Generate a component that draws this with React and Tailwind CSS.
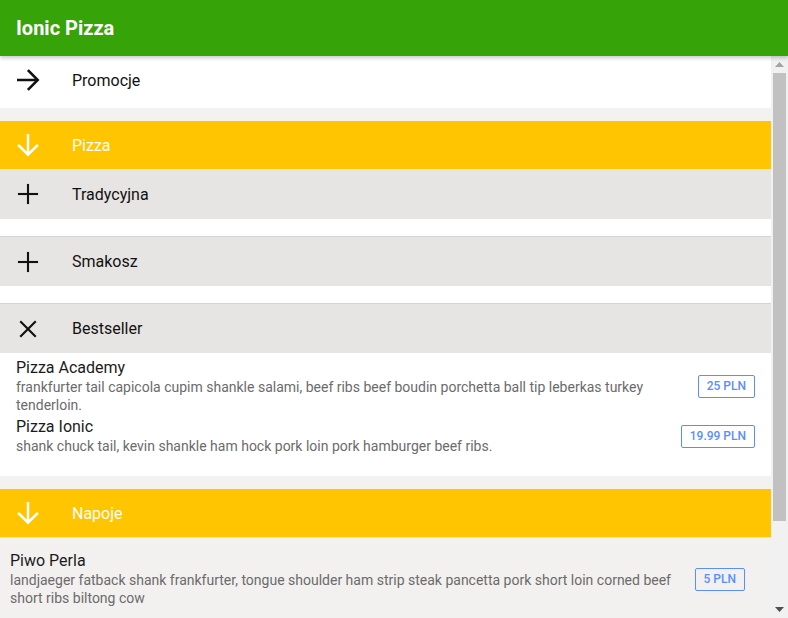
import React from 'react';

const font = { fontFamily: 'Roboto, "Noto Sans", Arial, sans-serif' };

function Icon({ name, className }) {
  const common = {
    fill: 'none',
    stroke: 'currentColor',
    strokeLinecap: 'square',
    strokeLinejoin: 'miter',
  };
  return (
    <svg viewBox="0 0 512 512" className={className}>
      {name === 'forward' && (
        <g {...common} strokeWidth="40">
          <polyline points="268 112 412 256 268 400" />
          <line x1="392" y1="256" x2="100" y2="256" />
        </g>
      )}
      {name === 'down' && (
        <g {...common} strokeWidth="40">
          <polyline points="112 268 256 412 400 268" />
          <line x1="256" y1="392" x2="256" y2="100" />
        </g>
      )}
      {name === 'add' && (
        <g {...common} strokeWidth="34">
          <line x1="256" y1="112" x2="256" y2="400" />
          <line x1="400" y1="256" x2="112" y2="256" />
        </g>
      )}
      {name === 'close' && (
        <g {...common} strokeWidth="34">
          <line x1="368" y1="368" x2="144" y2="144" />
          <line x1="368" y1="144" x2="144" y2="368" />
        </g>
      )}
    </svg>
  );
}

function Row({ icon, label, className, labelClass = 'pt-[2px]' }) {
  return (
    <div className={`flex items-center ${className}`}>
      <div className="w-[72px] pl-3 flex items-center">
        <Icon name={icon} className="w-8 h-8" />
      </div>
      <span className={`text-base ${labelClass}`}>{label}</span>
    </div>
  );
}

function Price({ children }) {
  return (
    <span className="shrink-0 h-[23px] px-2 flex items-center border border-[#5a8dff] rounded-[2px] text-xs font-medium text-[#5a8dff]">
      {children}
    </span>
  );
}

function Product({ name, desc, price, className }) {
  return (
    <div className={`flex items-center ${className}`}>
      <div className="flex-1 pr-4">
        <div className="text-base leading-5 text-[#1b1b1b]">{name}</div>
        <div className="text-sm leading-[18px] text-[#6b6b6b]">{desc}</div>
      </div>
      <Price>{price}</Price>
    </div>
  );
}

function Scrollbar() {
  return (
    <div className="w-[17px] shrink-0 flex flex-col bg-[#f1f1f1]">
      <div className="h-[17px] flex items-center justify-center">
        <svg width="9" height="5" viewBox="0 0 9 5">
          <polygon points="0,5 9,5 4.5,0" fill="#a3a3a3" />
        </svg>
      </div>
      <div className="flex-1 px-[2px]">
        <div className="h-[448px] bg-[#c1c1c1]" />
      </div>
      <div className="h-[17px] flex items-center justify-center">
        <svg width="9" height="5" viewBox="0 0 9 5">
          <polygon points="0,0 9,0 4.5,5" fill="#505050" />
        </svg>
      </div>
    </div>
  );
}

export default function App() {
  return (
    <div className="h-screen flex flex-col bg-white" style={font}>
      <header className="relative z-10 h-14 shrink-0 flex items-center px-4 bg-[#36a309] shadow-[0_2px_4px_rgba(0,0,0,0.22)]">
        <h1 className="text-xl font-bold text-white">Ionic Pizza</h1>
      </header>

      <div className="flex-1 min-h-0 flex">
        <div className="flex-1 overflow-hidden">
          <Row icon="forward" label="Promocje" className="h-[52px] pb-1 bg-white text-[#111]" />
          <div className="h-[13px] bg-[#f3f2f1]" />

          <Row icon="down" label="Pizza" className="h-12 bg-[#ffc500] text-white" />
          <Row icon="add" label="Tradycyjna" className="h-[50px] bg-[#e7e5e3] text-[#111]" />
          <div className="h-[17px] bg-white" />
          <Row icon="add" label="Smakosz" labelClass="pt-0" className="h-[50px] bg-[#e7e5e3] border-t border-[#d6d4d2] text-[#111]" />
          <div className="h-[17px] bg-white" />
          <Row icon="close" label="Bestseller" labelClass="pt-0" className="h-[50px] bg-[#e7e5e3] border-t border-[#d6d4d2] text-[#111]" />

          <div className="bg-white pt-[5px] pb-[21px] px-4 flex flex-col gap-[3px]">
            <Product
              name="Pizza Academy"
              desc="frankfurter tail capicola cupim shankle salami, beef ribs beef boudin porchetta ball tip leberkas turkey tenderloin."
              price="25 PLN"
            />
            <Product
              name="Pizza Ionic"
              desc="shank chuck tail, kevin shankle ham hock pork loin pork hamburger beef ribs."
              price="19.99 PLN"
            />
          </div>
          <div className="h-[13px] bg-[#f3f2f1]" />

          <Row icon="down" label="Napoje" className="h-[49px] bg-[#ffc500] text-white border-b border-[#e6e3de]" />
          <div className="bg-[#f2f1f0] pt-[13px] pb-[60px] pl-[10px] pr-[26px]">
            <Product
              name="Piwo Perla"
              desc="landjaeger fatback shank frankfurter, tongue shoulder ham strip steak pancetta pork short loin corned beef short ribs biltong cow"
              price="5 PLN"
            />
          </div>
        </div>
        <Scrollbar />
      </div>
    </div>
  );
}
